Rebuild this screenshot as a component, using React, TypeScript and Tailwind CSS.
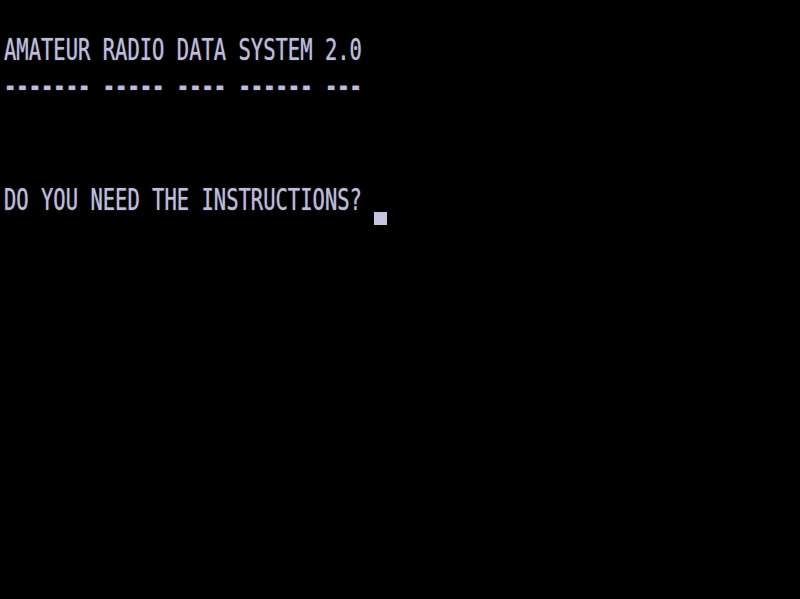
import React from "react";

const lines = [
  { text: "AMATEUR RADIO DATA SYSTEM 2.0", bold: false },
  { text: "------- ----- ---- ------ ---", bold: true },
  { text: "", bold: false },
  { text: "", bold: false },
];

function Row({ text, bold, children }: { text: string; bold?: boolean; children?: React.ReactNode }) {
  return (
    <div className="flex items-start h-[37.5px]">
      <div
        className={`whitespace-pre origin-top scale-y-[1.47] leading-none text-[20.5px] ${
          bold ? "font-bold" : ""
        }`}
      >
        {text}
      </div>
      {children}
    </div>
  );
}

export default function App() {
  return (
    <div className="w-[800px] h-[599px] bg-black overflow-hidden pt-[34.5px] pl-[4px] text-[#bcbcdc] font-['DejaVu_Sans_Mono',monospace] [text-shadow:0_0_1px_rgba(200,200,235,0.6)]">
      {lines.map((l, i) => (
        <Row key={i} text={l.text} bold={l.bold} />
      ))}
      <Row text="DO YOU NEED THE INSTRUCTIONS? ">
        {/* block cursor */}
        <div className="mt-[27.5px] w-[13px] h-[13px] bg-[#c4c4e0]" />
      </Row>
    </div>
  );
}
